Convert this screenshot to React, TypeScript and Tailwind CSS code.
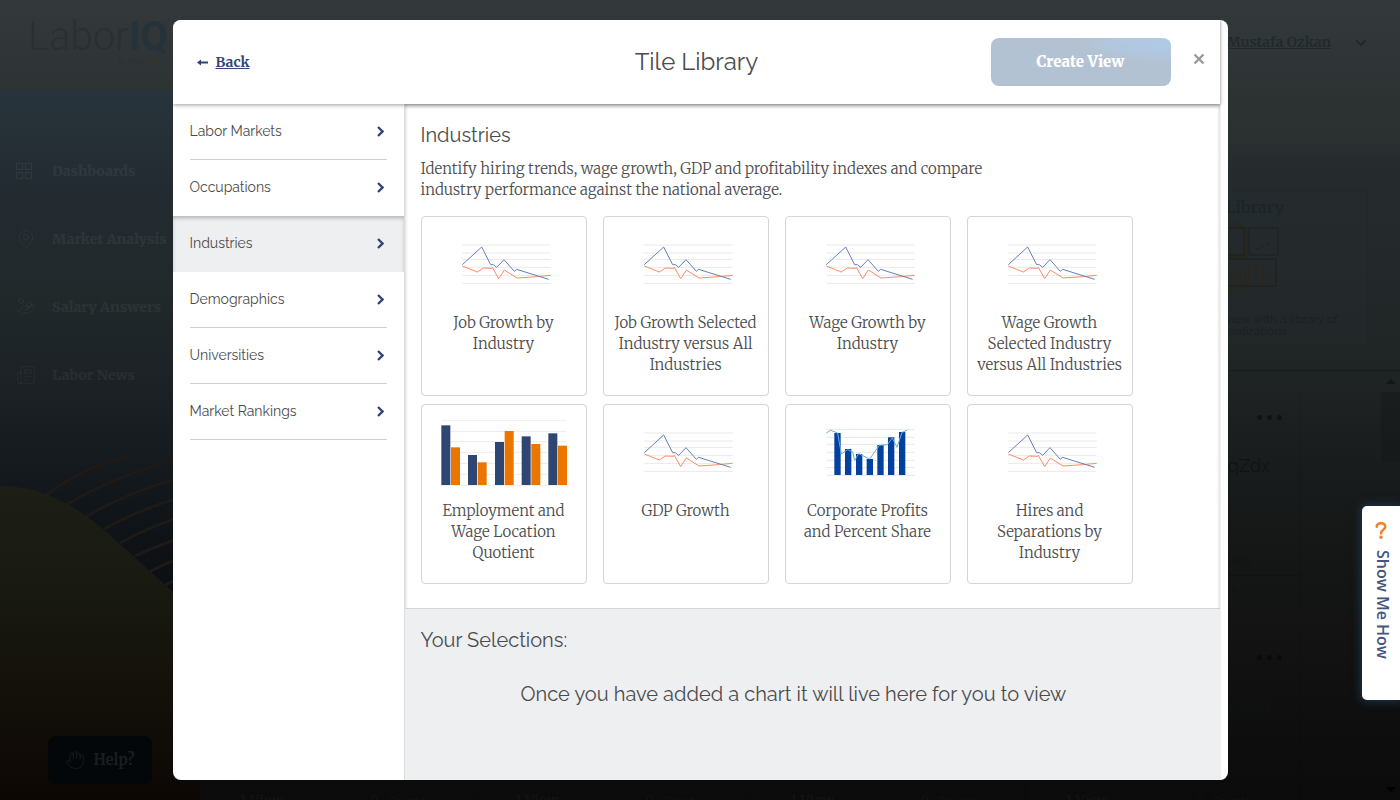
import React from "react";
import { ChevronDown, Hand, HandCoins, Lock, MapPin, Newspaper } from "lucide-react";

const serif = "font-['Merriweather','Liberation_Serif',serif]";
const sans = "font-['Raleway','Lato',sans-serif]";

const categories = [
  "Labor Markets",
  "Occupations",
  "Industries",
  "Demographics",
  "Universities",
  "Market Rankings",
];

type ChartKind = "lines" | "bars" | "combo";

const tiles: { title: string; chart: ChartKind }[] = [
  { title: "Job Growth by Industry", chart: "lines" },
  { title: "Job Growth Selected Industry versus All Industries", chart: "lines" },
  { title: "Wage Growth by Industry", chart: "lines" },
  { title: "Wage Growth Selected Industry versus All Industries", chart: "lines" },
  { title: "Employment and Wage Location Quotient", chart: "bars" },
  { title: "GDP Growth", chart: "lines" },
  { title: "Corporate Profits and Percent Share", chart: "combo" },
  { title: "Hires and Separations by Industry", chart: "lines" },
];

function LineChart() {
  return (
    <svg className="h-[72px] w-[126px]" viewBox="63 30 378 216" fill="none" aria-hidden="true">
      {[105, 129, 148, 172, 196, 220].map((y) => (
        <path key={y} d={`M127 ${y}H392`} stroke="#e9e9e9" strokeWidth="3" />
      ))}
      <path
        d="M127 168L172 186L190 174L215 175L217 172L236 206L253 180L291 204L350 200L392 196"
        stroke="#ff8a66"
        strokeWidth="3"
      />
      <path
        d="M127 164L185 111L212 164L220 164L230 172L252 149L283 184L290 178L386 208"
        stroke="#6480b8"
        strokeWidth="3"
      />
    </svg>
  );
}

function BarChart() {
  const pairs = [
    [64, 76, 142],
    [144, 165, 187],
    [225, 126, 93],
    [305, 109, 132],
    [385, 100, 137],
  ];
  return (
    <svg className="h-[72px] w-[126px]" viewBox="63 24 378 216" fill="none" overflow="visible" aria-hidden="true">
      {[61, 94, 125, 157, 190, 223, 256].map((y) => (
        <path key={y} d={`M64 ${y}H440`} stroke="#ececec" strokeWidth="3" />
      ))}
      {pairs.map(([x, a, b]) => (
        <g key={x}>
          <rect x={x} y={a} width="27" height={255 - a} fill="#2f4673" />
          <rect x={x + 29} y={b} width="27" height={255 - b} fill="#ec7500" />
        </g>
      ))}
    </svg>
  );
}

function ComboChart() {
  const bars = [
    [163, 99],
    [195, 147],
    [228, 162],
    [260, 177],
    [292, 135],
    [324, 112],
    [357, 96],
  ];
  return (
    <svg className="h-[72px] w-[126px]" viewBox="75 24 378 216" fill="none" aria-hidden="true">
      {[88, 112, 133, 157, 181, 203, 226].map((y) => (
        <path key={y} d={`M139 ${y}H404`} stroke="#e6e8ea" strokeWidth="3" />
      ))}
      {bars.map(([x, y]) => (
        <rect key={x} x={x} y={y} width="19" height={225 - y} fill="#03419f" />
      ))}
      <path
        d="M139 99L152 91L173 99L184 162L203 149L218 156L224 181L236 161L269 177L298 136L322 134L337 114L351 142L366 97L381 91"
        stroke="#68b0dc"
        strokeWidth="3"
      />
    </svg>
  );
}

function Chart({ kind }: { kind: ChartKind }) {
  if (kind === "bars") return <BarChart />;
  if (kind === "combo") return <ComboChart />;
  return <LineChart />;
}

function DashboardIcon() {
  return (
    <svg viewBox="0 0 16 16" className="size-4" fill="none" stroke="currentColor" aria-hidden="true">
      <path d="M.5.5h6v6h-6zM9.500.5h6v6h-6zM.5 9.500h6v6h-6zM9.500 9.500h6v6h-6z" />
    </svg>
  );
}

function ViewCard({ name }: { name: string }) {
  return (
    <div className="flex h-[215px] flex-col border-r border-black/10">
      <div className="flex justify-end gap-[5px] pt-6 pr-[18px]">
        {[0, 1, 2].map((n) => (
          <span key={n} className="size-[5px] rounded-full bg-black/40" />
        ))}
      </div>
      <div className={`${sans} pt-[34px] pr-[30px] text-right text-[18px] leading-[24px]`}>{name}</div>
      <div className="mt-auto flex items-center border-b border-black/20 px-4 pb-1">
        <span className={`${serif} text-[14px] font-bold`}>1 View</span>
        <span className={`${sans} ml-auto flex items-center gap-2 pr-8 text-[12px]`}>
          <Lock className="size-3" />
          Private
        </span>
      </div>
      <div className={`${sans} h-[30px] pr-[64px] text-right text-[12px] leading-[30px]`}>by Admin PM</div>
    </div>
  );
}

function Backdrop() {
  const links = [
    { label: "Dashboards", icon: <DashboardIcon /> },
    { label: "Market Analysis", icon: <MapPin className="size-5" strokeWidth={1} /> },
    { label: "Salary Answers", icon: <HandCoins className="size-5" strokeWidth={1} /> },
    { label: "Labor News", icon: <Newspaper className="size-5" strokeWidth={1} /> },
  ];
  return (
    <div
      className="flex h-screen flex-col overflow-hidden bg-linear-[180deg,#33393b_0%,#2a302f_18%,#262b2e_20%,#202526_44%,#181b1b_60%,#121312_78%,#0b0b0b_100%] text-[#101314]"
      aria-hidden="true"
    >
      <div className="flex h-[90px] shrink-0 items-start justify-between">
        <div className="flex flex-col pt-4 pl-7 text-[#2a2f31]">
          <div className="font-['Roboto',sans-serif] text-[40px] leading-[42px] font-light">
            Labor<b className="font-bold text-[#25323a]">IQ</b>
          </div>
          <div className={`${sans} pr-2 text-right text-[7px] leading-[8px]`}>
            by Think<span className="text-[#3a3226]">Why</span>
          </div>
        </div>
        <div className={`${serif} flex items-center gap-[22px] pt-8 pr-[31px] text-[14px] font-bold text-[#22292c]`}>
          <span className="underline">Mustafa Ozkan</span>
          <ChevronDown className="size-4" strokeWidth={3} />
        </div>
      </div>
      <div className="flex min-h-0 grow">
        <div className="relative flex w-[200px] shrink-0 flex-col bg-linear-[180deg,#27343b_0%,#232b31_14%,#21292b_28%,#1b2024_44%,#11161a_58%,#0c0f12_70%,#0b0805_100%]">
          <svg className="absolute bottom-0 left-0 h-[350px] w-[200px]" viewBox="0 450 200 350" fill="none">
            <defs>
              <linearGradient id="hill" x1="0" y1="486" x2="0" y2="800" gradientUnits="userSpaceOnUse">
                <stop offset="0" stopColor="#1d1f16" />
                <stop offset=".4" stopColor="#17180f" />
                <stop offset=".7" stopColor="#130f09" />
                <stop offset="1" stopColor="#0c0704" />
              </linearGradient>
            </defs>
            <g stroke="#1d1a17" strokeWidth="3">
              <path d="M46 495Q85 466 127 457" />
              <path d="M66 505Q115 475 200 452" />
              <path d="M86 517Q130 490 200 472" />
              <path d="M104 529Q145 506 200 492" />
              <path d="M120 543Q155 523 200 512" />
              <path d="M135 556Q165 542 200 532" />
              <path d="M149 572Q175 558 200 552" />
              <path d="M163 586Q180 578 200 572" />
            </g>
            <path d="M0 486C36 486 68 500 104 530C130 552 150 572 172 591L200 616V800H0Z" fill="url(#hill)" />
          </svg>
          <div className="flex flex-col gap-11 pt-[69px] pl-4 text-white/5">
            {links.map((l) => (
              <div key={l.label} className="flex h-6 items-center">
                <span className="w-9 shrink-0">{l.icon}</span>
                <span className={`${serif} text-[14px] font-black whitespace-nowrap`}>{l.label}</span>
              </div>
            ))}
          </div>
          <div className={`${serif} relative mt-auto mb-4 ml-12 flex h-12 w-[104px] items-center justify-center gap-2 rounded-lg bg-[#03070a] text-[15px] font-bold text-[#1b1e20]`}>
            <Hand className="size-5" strokeWidth={1} />
            Help?
          </div>
        </div>
        <div className="flex min-w-0 grow flex-col">
          <div className="h-14 shrink-0 border-b border-black/5" />
          <div className="mt-11 mr-8 flex h-[156px] shrink-0 flex-col items-end rounded border border-black/5 bg-[#262c2c]/40">
            <div className={`${serif} pt-1 pr-[83px] text-[16px] leading-[24px] font-bold text-[#1b2429]`}>
              Tile Library
            </div>
            <svg className="mt-1 mr-[88px] h-[68px] w-[90px] shrink-0" viewBox="1190 223 90 68" fill="none">
              <path d="M1210 224h26l11 5v27h-37M1210 291l38-5" stroke="#26271f" strokeWidth="4" />
              <path d="M1200 228h45v27h-45zM1250 228h29v27h-29zM1200 259h77v27h-77z" stroke="#1b2123" />
              <path d="M1257 249l3-1M1262 247l3-2M1267 245l3-3" stroke="#1b2123" />
              <path
                d="M1233 284v-22M1237 284v-17M1241 284v-10M1246 284v-18M1250 284v-20M1257 284v-19M1264 284v-20M1270 284v-16M1275 284v-9"
                stroke="#2d261f"
                strokeWidth="1.500"
              />
            </svg>
            <div className={`${sans} pt-[22px] pr-[29px] text-right text-[12px] leading-[12px] text-[#1a1e1f]`}>
              Create a view with a library of
            </div>
            <div className={`${sans} pr-20 text-[12px] leading-[12px] text-[#1a1e1f]`}>data visualizations</div>
          </div>
          <div className="mt-6 flex min-h-0 grow overflow-hidden border-t border-black/20">
            <div className="grid grow grid-cols-4 content-start gap-x-6 gap-y-[25px] pt-5 pr-[80px] pl-6">
              {["Austin", "Dallas", "Houston", "View BqZdx", "Denver", "Boston", "Phoenix", "View GneiG"].map((n) => (
                <ViewCard key={n} name={n} />
              ))}
            </div>
            <div className="flex w-[19px] shrink-0 flex-col items-center justify-between py-2">
              <div className="flex w-full flex-col items-center gap-2">
                <svg className="h-[5px] w-2.5" viewBox="0 0 10 5">
                  <path d="M0 5L5 0L10 5Z" fill="#131617" />
                </svg>
                <div className="h-[70px] w-full bg-black/10" />
              </div>
              <svg className="h-[5px] w-2.5" viewBox="0 0 10 5">
                <path d="M0 0L5 5L10 0Z" fill="#000" />
              </svg>
            </div>
          </div>
        </div>
      </div>
    </div>
  );
}

function TileLibrary() {
  return (
    <div
      role="dialog"
      aria-label="Tile Library"
      className="flex h-full w-full max-w-[1055px] overflow-hidden rounded-[8px] bg-white pr-[7px] text-[#4b4b4d]"
    >
      <div className="flex min-w-0 grow flex-col border-r border-[#f0f0f1]">
        <header className="relative grid h-[84px] shrink-0 grid-cols-[1fr_auto_1fr] items-center bg-white pr-[15px] pl-6 shadow-[0_1px_4px_rgba(0,0,0,0.4)]">
          <a href="#back" className={`${serif} flex items-center gap-2 text-[14px] font-bold text-[#2f4577]`}>
            <svg className="h-[7px] w-[11px]" viewBox="0 0 11 7" aria-hidden="true">
              <path d="M0 3.500L4 .5V2.500H11V4.500H4V6.500Z" fill="currentColor" />
            </svg>
            <span className="underline">Back</span>
          </a>
          <h1 className={`${sans} pr-2 text-[24px] leading-[30px]`}>Tile Library</h1>
          <div className="flex items-center justify-end gap-[22px]">
            <button
              type="button"
              className={`${serif} h-12 w-[180px] rounded-[8px] bg-[#b3c2d3] bg-[radial-gradient(ellipse_at_100%_0%,#b0cbe6_0%,#b1c8e0_20%,#b3c2d3_38%)] text-[15px] font-black text-white`}
            >
              Create View
            </button>
            <button type="button" aria-label="Close" className="mb-[6px] text-[#999a9b]">
              <svg className="size-3" viewBox="0 0 12 12" fill="none" aria-hidden="true">
                <path d="M1.500 1.500L10.500 10.500M10.500 1.500L1.500 10.500" stroke="currentColor" strokeWidth="2.400" />
              </svg>
            </button>
          </div>
        </header>
        <div className="flex min-h-0 grow">
          <nav className="w-[231px] shrink-0" aria-label="Categories">
            {categories.map((c) => {
              const active = c === "Industries";
              return (
                <button
                  key={c}
                  type="button"
                  className={
                    active
                      ? "flex h-14 w-full bg-[#eeeff1] px-[17px] shadow-[inset_0_3px_4px_-1px_rgba(0,0,0,0.26)]"
                      : "flex h-14 w-full px-[17px]"
                  }
                >
                  <span
                    className={`${sans} flex h-14 grow items-center justify-between border-b pr-[3px] text-[14px] ${
                      active || c === "Occupations" ? "border-transparent" : "border-[#cfd0d2]"
                    }`}
                  >
                    {c}
                    <svg className="h-[11px] w-[7px]" viewBox="0 0 7 11" fill="none" aria-hidden="true">
                      <path d="M1 1L5.500 5.500L1 10" stroke="#2f4577" strokeWidth="2.400" />
                    </svg>
                  </span>
                </button>
              );
            })}
          </nav>
          <main className="flex min-w-0 grow flex-col border-l border-[#dcdcde] shadow-[inset_0_3px_4px_-1px_rgba(0,0,0,0.2),inset_2px_0_3px_-1px_rgba(0,0,0,0.08),inset_-2px_0_3px_-1px_rgba(0,0,0,0.08)]">
            <section className="px-4 pt-[18px] pb-6">
              <h2 className={`${sans} text-[20px] leading-[26px]`}>Industries</h2>
              <p className={`${serif} mt-[10px] max-w-[576px] text-[15px] leading-[21px] font-light`}>
                Identify hiring trends, wage growth, GDP and profitability indexes and compare industry performance
                against the national average.
              </p>
              <div className="mt-4 grid max-w-[712px] grid-cols-4 gap-x-4 gap-y-2">
                {tiles.map((t) => (
                  <button
                    key={t.title}
                    type="button"
                    className="flex h-[180px] flex-col items-center rounded-[4px] border border-[#d3d4d6] bg-white px-2 pt-[3px]"
                  >
                    <Chart kind={t.chart} />
                    <span className={`${serif} mt-5 text-center text-[15px] leading-[21px] font-light`}>{t.title}</span>
                  </button>
                ))}
              </div>
            </section>
            <section className="grow border-t border-[#d3d4d6] bg-[#eeeff1] pt-[18px] pr-[53px] pl-4">
              <h2 className={`${sans} text-[20px] leading-[26px]`}>Your Selections:</h2>
              <p className={`${sans} mt-7 text-center text-[20px] leading-[26px]`}>
                Once you have added a chart it will live here for you to view
              </p>
            </section>
          </main>
        </div>
      </div>
    </div>
  );
}

export default function App() {
  return (
    <div className="relative">
      <Backdrop />
      <div className="absolute inset-0 flex justify-center py-5">
        <TileLibrary />
      </div>
      <button
        type="button"
        className="absolute top-[506px] right-0 flex h-[194px] w-[38px] flex-col items-center rounded-l-[5px] bg-white pt-4 text-[#44557f] shadow-[0_0_8px_2px_#1c3346]"
      >
        <svg className="h-[17px] w-3" viewBox="0 0 12 18" fill="none" aria-hidden="true">
          <path
            d="M1.500 5C1.500 0 10.500 0 10.500 5C10.500 8.500 6 8 6 12"
            stroke="#f5812f"
            strokeWidth="2.800"
            strokeLinecap="round"
          />
          <circle cx="6" cy="16.200" r="1.800" fill="#f5812f" />
        </svg>
        <span className="mt-[11px] ml-1 font-['Open_Sans',sans-serif] text-[16px] leading-[20px] font-semibold [writing-mode:vertical-rl]">
          Show Me How
        </span>
      </button>
    </div>
  );
}
